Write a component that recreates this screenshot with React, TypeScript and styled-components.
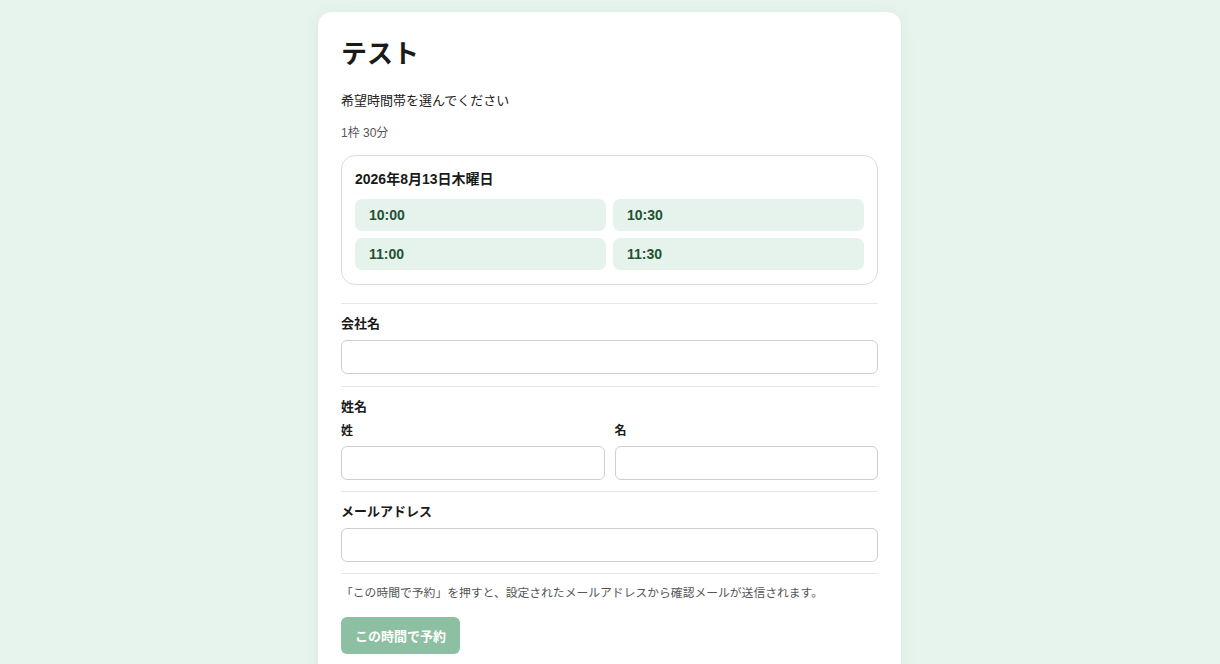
import React from "react";
import styled, { createGlobalStyle } from "styled-components";

const GlobalStyle = createGlobalStyle`
  html, body {
    margin: 0;
    padding: 0;
    background: #e7f4ed;
  }
  body {
    font-family: "Liberation Sans", "Noto Sans CJK JP", sans-serif;
    color: #1d1d1d;
  }
`;

const Page = styled.div`
  min-height: 664px;
  padding-top: 12px;
  display: flex;
  justify-content: center;
`;

const Card = styled.div`
  width: 583px;
  margin-left: -1px;
  box-sizing: border-box;
  background: #fff;
  border-radius: 14px;
  box-shadow: 0 2px 16px rgba(60, 110, 80, 0.08);
  padding: 24px 23px 40px;
`;

const Title = styled.h1`
  margin: 0;
  font-size: 26px;
  line-height: 36px;
  font-weight: 700;
  color: #1a1a1a;
`;

const Lead = styled.p`
  margin: 18px 0 0;
  font-size: 13px;
  line-height: 22px;
  color: #222;
`;

const Meta = styled.p`
  margin: 13px 0 0;
  font-size: 12px;
  line-height: 16px;
  color: #555;
`;

const DayBox = styled.div`
  margin-top: 14px;
  border: 1px solid #dcdcdc;
  border-radius: 14px;
  padding: 13px 13px 14px;
`;

const DayTitle = styled.div`
  font-size: 14px;
  font-weight: 700;
  line-height: 20px;
  color: #1a1a1a;
`;

const SlotGrid = styled.div`
  margin-top: 10px;
  display: grid;
  grid-template-columns: 1fr 1fr;
  gap: 7px;
`;

const Slot = styled.button`
  height: 32px;
  border: none;
  border-radius: 7px;
  background: #e6f3ec;
  color: #1e5233;
  font-family: inherit;
  font-size: 14px;
  font-weight: 700;
  text-align: left;
  padding: 0 14px;
  cursor: pointer;
`;

const Divider = styled.hr<{ $top?: number }>`
  margin: ${(p) => p.$top ?? 12}px 0 0;
  border: none;
  border-top: 1px solid #e6e6e6;
`;

const Field = styled.div`
  padding-top: 10px;
`;

const Label = styled.div`
  font-size: 13px;
  font-weight: 700;
  line-height: 20px;
  color: #1a1a1a;
  margin-bottom: 6px;
`;

const SubLabel = styled.div`
  font-size: 12px;
  font-weight: 700;
  line-height: 16px;
  color: #1a1a1a;
  margin-bottom: 7px;
`;

const Input = styled.input`
  display: block;
  width: 100%;
  box-sizing: border-box;
  height: 34px;
  border: 1px solid #cfcfcf;
  border-radius: 6px;
  padding: 0 10px;
  font-family: inherit;
  font-size: 14px;
  background: #fff;
`;

const NameRow = styled.div`
  display: grid;
  grid-template-columns: 1fr 1fr;
  gap: 10px;
`;

const Note = styled.p`
  margin: 11px 0 0;
  font-size: 11.8px;
  line-height: 16px;
  color: #555;
`;

const Submit = styled.button`
  margin-top: 16px;
  height: 37px;
  padding: 0 14px;
  border: none;
  border-radius: 6px;
  background: #8dbfa2;
  color: #fff;
  font-family: inherit;
  font-size: 13px;
  font-weight: 700;
  cursor: not-allowed;
`;

const slots = ["10:00", "10:30", "11:00", "11:30"];

export default function App() {
  return (
    <>
      <GlobalStyle />
      <Page>
        <Card>
          <Title>テスト</Title>
          <Lead>希望時間帯を選んでください</Lead>
          <Meta>1枠 30分</Meta>
          <DayBox>
            <DayTitle>2026年8月13日木曜日</DayTitle>
            <SlotGrid>
              {slots.map((s) => (
                <Slot key={s} type="button">
                  {s}
                </Slot>
              ))}
            </SlotGrid>
          </DayBox>
          <Divider $top={18} />
          <Field>
            <Label>会社名</Label>
            <Input type="text" />
          </Field>
          <Divider />
          <Field>
            <Label>姓名</Label>
            <NameRow>
              <div>
                <SubLabel>姓</SubLabel>
                <Input type="text" />
              </div>
              <div>
                <SubLabel>名</SubLabel>
                <Input type="text" />
              </div>
            </NameRow>
          </Field>
          <Divider $top={11} />
          <Field>
            <Label>メールアドレス</Label>
            <Input type="email" />
          </Field>
          <Divider $top={11} />
          <Note>
            「この時間で予約」を押すと、設定されたメールアドレスから確認メールが送信されます。
          </Note>
          <Submit type="button" disabled>
            この時間で予約
          </Submit>
        </Card>
      </Page>
    </>
  );
}
